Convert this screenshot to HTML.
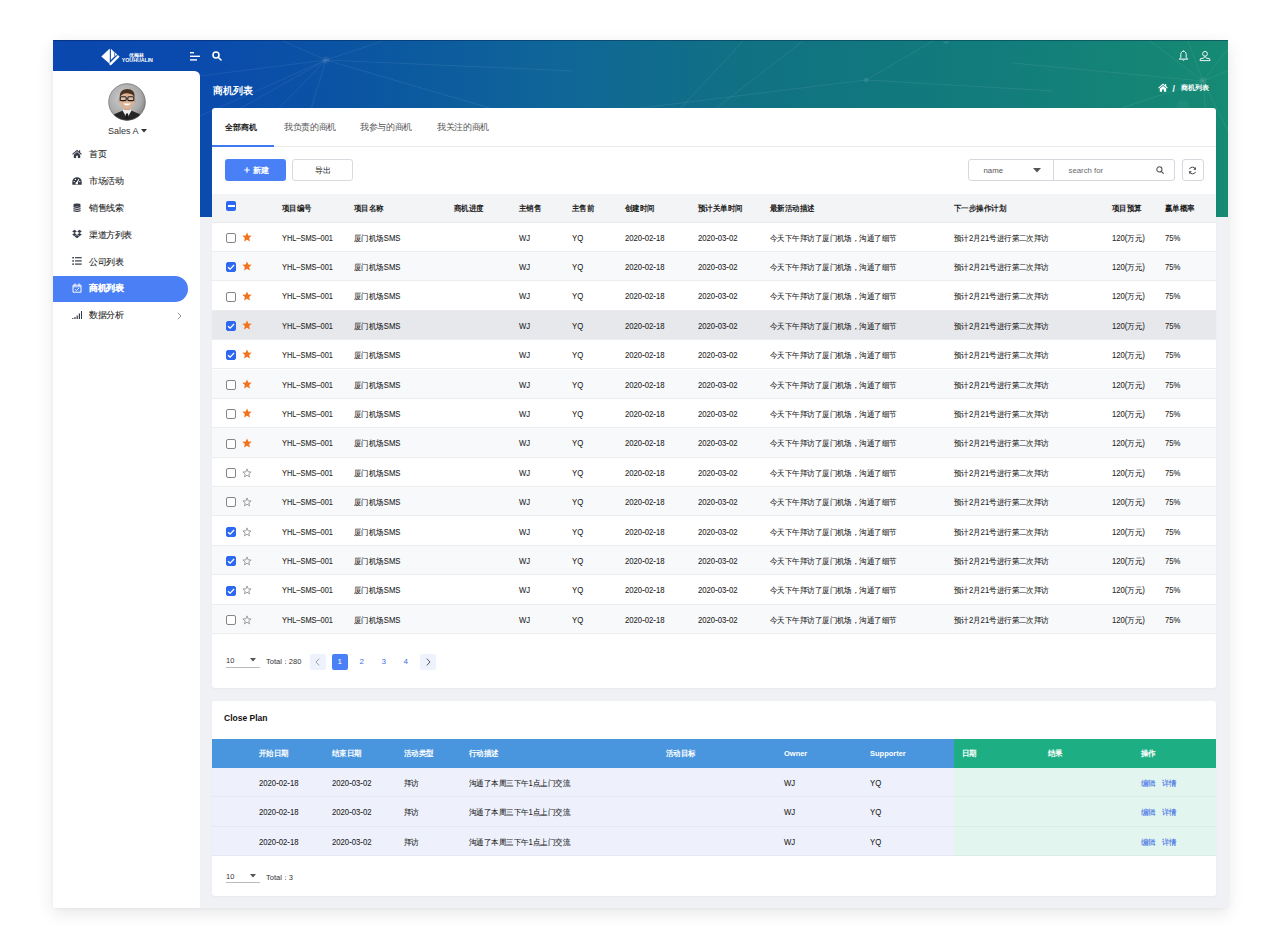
<!DOCTYPE html><html><head><meta charset="utf-8"><style>
*{box-sizing:border-box;margin:0;padding:0}
html,body{width:1280px;height:947px;overflow:hidden;background:#fff;font-family:"Liberation Sans",sans-serif;color:#222}
.c{font-size:0.92em}
#frame{position:absolute;left:53px;top:40px;width:1175px;height:868px;background:#f0f1f4;box-shadow:0 5px 16px rgba(0,0,0,0.10),0 1px 3px rgba(0,0,0,0.03);overflow:hidden}
#hdr{position:absolute;left:0;top:0;width:1175px;height:177px;background:linear-gradient(90deg,#0a47ae 0%,#0a4aad 12%,#0b55a2 26%,#0f6698 43%,#117282 60%,#127d7b 81%,#168a73 100%);border-top:1px solid rgba(0,20,60,0.35)}
#side{position:absolute;left:0;top:30.5px;width:147px;height:838px;background:#fff;border-top-right-radius:5.5px}
.card{position:absolute;left:159px;width:1004px;background:#fff;border-radius:3px;box-shadow:0 1px 2px rgba(0,0,0,0.035)}
.a{position:absolute;white-space:nowrap;line-height:10px}
.th{position:absolute;font-size:8px;font-weight:bold;color:#1e1e1e;white-space:nowrap;line-height:10px;transform:scaleX(0.935);transform-origin:0 0}
.th .c{font-size:1em}
.td{position:absolute;font-size:8.3px;color:#1e1e1e;white-space:nowrap;line-height:10px;transform:scaleX(0.93);transform-origin:0 0}
.td .c{font-size:1em}
.td,.mi{-webkit-text-stroke:0.08px currentColor}
.row{position:absolute;left:0;width:1004px;height:29.4px;border-bottom:1px solid #ebedf0}
.cb{position:absolute;width:10px;height:10px;border:1.1px solid #858585;border-radius:2px;background:#fff}
.cb.on{background:#2c68f2;border-color:#2c68f2}
.mi{position:absolute;left:36px;font-size:9px;color:#1e1e1e;line-height:10px;white-space:nowrap}
.mi .c{font-size:1em}
.mi{transform:scale(0.955);transform-origin:0 50%}
.ic{position:absolute}
</style></head><body>
<div id="frame">
<div id="hdr">
<svg width="1175" height="177" style="position:absolute;left:0;top:0" viewBox="0 0 1175 177">
<g stroke="rgba(255,255,255,0.075)" stroke-width="1" fill="none">
<line x1="273" y1="19" x2="147" y2="35"/><line x1="273" y1="19" x2="147" y2="75"/><line x1="273" y1="19" x2="186" y2="68"/>
<line x1="273" y1="19" x2="225" y2="68"/><line x1="273" y1="19" x2="258" y2="68"/><line x1="273" y1="19" x2="440" y2="68"/>
<line x1="273" y1="19" x2="230" y2="0"/><line x1="273" y1="19" x2="330" y2="0"/><line x1="273" y1="19" x2="520" y2="30"/>
<line x1="627" y1="68" x2="690" y2="0"/><line x1="662" y1="68" x2="750" y2="0"/><line x1="580" y1="68" x2="813" y2="39"/>
<line x1="813" y1="39" x2="880" y2="0"/><line x1="813" y1="39" x2="1000" y2="50"/>
<line x1="1150" y1="40" x2="1097" y2="0"/><line x1="1150" y1="40" x2="1175" y2="8"/><line x1="1150" y1="40" x2="960" y2="22"/>
<line x1="1150" y1="40" x2="1162" y2="177"/><line x1="1150" y1="40" x2="1175" y2="90"/><line x1="1150" y1="40" x2="1060" y2="70"/>
<line x1="1150" y1="40" x2="1175" y2="30"/><line x1="1150" y1="40" x2="1135" y2="0"/>
</g>
<g fill="rgba(255,255,255,0.08)"><circle cx="273" cy="19" r="3.5"/><circle cx="1150" cy="40" r="3.5"/><circle cx="813" cy="39" r="2.5"/><circle cx="893" cy="0" r="3"/><circle cx="1130" cy="65" r="6" fill="rgba(255,255,255,0.04)"/></g>
</svg>
<svg class="ic" style="left:45px;top:4px" width="24" height="22" viewBox="0 0 24 22">
<path d="M3.3 11.6 L11.8 3.4 L11.8 17.6 L11 18.2 Z" fill="#fff"/>
<path d="M12.9 3.7 L16.4 7.2 L16.4 11.6 L12.9 15.0 Z" fill="#fff"/>
<path d="M17.1 7.6 L19.3 9.7 L17.1 11.0 Z" fill="#fff"/>
<path d="M10.9 18.9 L19.9 10.1 L21.6 11.7 L12.7 20.6 Z" fill="#fff"/>
</svg>
<div class="a" style="left:75.5px;top:10.5px;font-size:5px;color:#fff;line-height:6px;font-weight:bold">优梅林</div>
<div class="a" style="left:68.8px;top:16px;font-size:5.3px;color:#fff;line-height:6px;font-weight:bold;letter-spacing:-0.05px">YOUHUALIN</div>
<svg class="ic" style="left:137px;top:10px" width="11" height="11" viewBox="0 0 11 11">
<rect x="0" y="1" width="4" height="1.4" fill="#fff"/><rect x="0" y="4.6" width="10" height="1.4" fill="#fff"/><rect x="0" y="8.2" width="7" height="1.4" fill="#fff"/></svg>
<svg class="ic" style="left:159px;top:10px" width="10" height="10" viewBox="0 0 10 10">
<circle cx="4" cy="4" r="3" stroke="#fff" stroke-width="1.6" fill="none"/><line x1="6.2" y1="6.2" x2="9" y2="9" stroke="#fff" stroke-width="1.6" stroke-linecap="round"/></svg>
<svg class="ic" style="left:1125px;top:9px" width="11" height="12" viewBox="0 0 11 12">
<path d="M5.5 1.3 C3.7 1.3 2.8 2.7 2.8 4.6 L2.8 7.4 C2.8 8.2 2.2 8.6 1.2 9.1 L9.8 9.1 C8.8 8.6 8.2 8.2 8.2 7.4 L8.2 4.6 C8.2 2.7 7.3 1.3 5.5 1.3 Z" stroke="#fff" stroke-width="0.95" fill="none" stroke-linejoin="round"/>
<path d="M4.5 9.6 Q5.5 11.2 6.5 9.6" stroke="#fff" stroke-width="0.95" fill="none"/><line x1="5.5" y1="0.4" x2="5.5" y2="1.4" stroke="#fff" stroke-width="0.9"/></svg>
<svg class="ic" style="left:1146px;top:9px" width="12" height="12" viewBox="0 0 12 12">
<circle cx="6" cy="3.8" r="2.4" stroke="#fff" stroke-width="0.9" fill="none"/>
<path d="M6 6.4 L4.6 8.2 L1.6 8.6 L0.9 10.6 L11.1 10.6 L10.4 8.6 L7.4 8.2 Z" stroke="#fff" stroke-width="0.9" fill="none" stroke-linejoin="round"/></svg>
<div class="a" style="left:160px;top:45px;font-size:10px;color:#fff;font-weight:bold"><span style="font-size:9.9px">商机列表</span></div>
<svg class="ic" style="left:1104.5px;top:41.8px" width="10" height="9" viewBox="0 0 10 9">
<path d="M5 0.6 L0.2 4.7 L0.9 5.5 L5 2.0 L9.1 5.5 L9.8 4.7 L8.2 3.3 L8.2 1.0 L7.0 1.0 L7.0 2.3 Z" fill="#fff"/><path d="M5 2.9 L1.8 5.6 L1.8 8.7 L4.1 8.7 L4.1 6.6 L5.9 6.6 L5.9 8.7 L8.2 8.7 L8.2 5.6 Z" fill="#fff"/></svg>
<div class="a" style="left:1119.5px;top:42.5px;font-size:8.5px;color:#fff;font-weight:bold">/</div>
<div class="a" style="left:1128px;top:42.3px;font-size:8px;color:#fff;font-weight:bold"><span class="c">商机列表</span></div>
</div>
<div id="side">
<svg class="ic" style="left:55px;top:12px" width="38" height="38" viewBox="0 0 38 38">
<defs><clipPath id="av"><circle cx="19" cy="19" r="18.5"/></clipPath>
<radialGradient id="bg" cx="0.42" cy="0.4" r="0.65"><stop offset="0" stop-color="#cfcfcf"/><stop offset="0.7" stop-color="#a9a9a9"/><stop offset="1" stop-color="#7a7a7a"/></radialGradient></defs>
<g clip-path="url(#av)">
<rect width="38" height="38" fill="url(#bg)"/>
<path d="M1 38 Q3 32 9 30 L15 27.5 L19 31 L23 27.5 L29 30 Q35 32 37 38 Z" fill="#262626"/>
<path d="M14.5 27.5 L19 35.5 L23.5 27.5 L21.5 25.5 L16.5 25.5 Z" fill="#eeeeee"/>
<path d="M18 30.5 L20 30.5 L21 36 L17 36 Z" fill="#1b1b1b"/>
<rect x="16.2" y="22" width="5.6" height="5" fill="#c99877"/>
<ellipse cx="11.6" cy="17.5" rx="1.2" ry="2" fill="#c99877"/><ellipse cx="26.4" cy="17.5" rx="1.2" ry="2" fill="#c99877"/>
<ellipse cx="19" cy="17.2" rx="7.2" ry="9.2" fill="#dcb296"/>
<path d="M11.6 15 Q11 6.5 19 6 Q27.5 6 26.6 15 Q25.5 10.5 19 10.2 Q13 10.4 11.6 15 Z" fill="#4a3020"/>
<rect x="12.2" y="13.8" width="6" height="3.8" rx="1.2" stroke="#1c1c1c" stroke-width="1.1" fill="rgba(255,255,255,0.15)"/>
<rect x="19.8" y="13.8" width="6" height="3.8" rx="1.2" stroke="#1c1c1c" stroke-width="1.1" fill="rgba(255,255,255,0.15)"/>
<path d="M15 20.6 Q19 24.6 23 20.6 Z" fill="#fff"/>
</g>
<circle cx="19" cy="19" r="18.3" stroke="#666" stroke-width="0.6" fill="none"/>
</svg>
<div class="a" style="left:55px;top:55px;font-size:9px;color:#333">Sales A</div>
<svg class="ic" style="left:88px;top:58px" width="6" height="4" viewBox="0 0 6 4"><path d="M0 0 L6 0 L3 3.5 Z" fill="#333"/></svg>
<div style="position:absolute;left:0;top:205px;width:135px;height:26px;background:#4a7ff5;border-radius:0 13px 13px 0"></div>
<svg class="ic" style="left:19px;top:78.3px" width="10" height="10" viewBox="0 0 10 10"><path d="M5 0.8 L0.2 4.9 L0.9 5.7 L5 2.2 L9.1 5.7 L9.8 4.9 L8.2 3.5 L8.2 1.2 L7.0 1.2 L7.0 2.5 Z" fill="#363b47"/><path d="M5 3.1 L1.8 5.8 L1.8 8.9 L4.1 8.9 L4.1 6.8 L5.9 6.8 L5.9 8.9 L8.2 8.9 L8.2 5.8 Z" fill="#363b47"/></svg>
<div class="mi" style="top:78.7px;color:#1e1e1e;"><span class="c">首页</span></div>
<svg class="ic" style="left:19px;top:105.3px" width="10" height="10" viewBox="0 0 10 10"><path d="M5 1.2 A4.7 4.7 0 0 0 0.3 5.9 L0.3 8.8 L9.7 8.8 L9.7 5.9 A4.7 4.7 0 0 0 5 1.2 Z" fill="#363b47"/><circle cx="2.2" cy="5.6" r="0.7" fill="#fff"/><circle cx="3.4" cy="3.4" r="0.7" fill="#fff"/><circle cx="7.8" cy="5.6" r="0.7" fill="#fff"/><path d="M4.6 7.6 L6.8 3.2" stroke="#fff" stroke-width="1.1"/><circle cx="4.8" cy="7.3" r="1.2" fill="#fff"/></svg>
<div class="mi" style="top:105.7px;color:#1e1e1e;"><span class="c">市场活动</span></div>
<svg class="ic" style="left:19px;top:132.0px" width="10" height="10" viewBox="0 0 10 10"><ellipse cx="5" cy="1.9" rx="3.6" ry="1.3" fill="#363b47"/><path d="M1.4 2.8 Q5 4.4 8.6 2.8 L8.6 4.2 Q5 5.8 1.4 4.2 Z" fill="#363b47"/><path d="M1.4 4.9 Q5 6.5 8.6 4.9 L8.6 6.3 Q5 7.9 1.4 6.3 Z" fill="#363b47"/><path d="M1.4 7.0 Q5 8.6 8.6 7.0 L8.6 8.2 Q5 9.8 1.4 8.2 Z" fill="#363b47"/></svg>
<div class="mi" style="top:132.4px;color:#1e1e1e;"><span class="c">销售线索</span></div>
<svg class="ic" style="left:19px;top:158.9px" width="10" height="10" viewBox="0 0 10 10"><path d="M2.5 0.8 L0.2 2.4 L2.5 4 L4.8 2.4 Z M7.5 0.8 L5.2 2.4 L7.5 4 L9.8 2.4 Z M2.5 4 L0.2 5.6 L2.5 7.2 L4.8 5.6 Z M7.5 4 L5.2 5.6 L7.5 7.2 L9.8 5.6 Z M5 6 L2.6 7.6 L5 9.2 L7.4 7.6 Z" fill="#363b47"/></svg>
<div class="mi" style="top:159.3px;color:#1e1e1e;"><span class="c">渠道方列表</span></div>
<svg class="ic" style="left:19px;top:185.9px" width="10" height="10" viewBox="0 0 10 10"><rect x="0.3" y="1" width="1.6" height="1.5" fill="#363b47"/><rect x="3" y="1.1" width="6.7" height="1.2" fill="#363b47"/><rect x="0.3" y="4.2" width="1.6" height="1.5" fill="#363b47"/><rect x="3" y="4.3" width="6.7" height="1.2" fill="#363b47"/><rect x="0.3" y="7.4" width="1.6" height="1.5" fill="#363b47"/><rect x="3" y="7.5" width="6.7" height="1.2" fill="#363b47"/></svg>
<div class="mi" style="top:186.3px;color:#1e1e1e;"><span class="c">公司列表</span></div>
<svg class="ic" style="left:19px;top:212.2px" width="10" height="10" viewBox="0 0 10 10"><path d="M1 2.2 L9 2.2 L9 9.2 L1 9.2 Z" stroke="#fff" stroke-width="1" fill="none"/><line x1="1" y1="3.8" x2="9" y2="3.8" stroke="#fff" stroke-width="0.8"/><rect x="2.4" y="0.5" width="1.1" height="2.4" fill="#fff"/><rect x="6.5" y="0.5" width="1.1" height="2.4" fill="#fff"/><path d="M3.1 6.3 L4.5 7.5 L7 5.1" stroke="#fff" stroke-width="0.9" fill="none"/></svg>
<div class="mi" style="top:212.6px;color:#fff;font-weight:bold"><span class="c">商机列表</span></div>
<svg class="ic" style="left:19px;top:239.2px" width="10" height="10" viewBox="0 0 10 10"><rect x="0.2" y="8" width="1.2" height="1" fill="#363b47"/><rect x="2.4" y="7" width="1.2" height="2" fill="#363b47"/><rect x="4.6" y="5.5" width="1.2" height="3.5" fill="#363b47"/><rect x="6.8" y="3.5" width="1.2" height="5.5" fill="#363b47"/><rect x="9" y="1" width="1" height="8" fill="#363b47"/></svg>
<div class="mi" style="top:239.6px;color:#1e1e1e;"><span class="c">数据分析</span></div>
<svg class="ic" style="left:124px;top:241px" width="5" height="8" viewBox="0 0 5 8"><path d="M0.8 0.8 L4 4 L0.8 7.2" stroke="#888" stroke-width="0.9" fill="none"/></svg>
</div>
<div class="card" style="top:68px;height:580px">
<div class="a" style="left:13px;top:14px;font-size:9px;color:#1a1a1a;font-weight:bold"><span style="font-size:8.3px">全部商机</span></div>
<div class="a" style="left:72px;top:14px;font-size:9px;color:#555"><span style="font-size:9px;display:inline-block;transform:scale(0.96);transform-origin:0 50%">我负责的商机</span></div>
<div class="a" style="left:148px;top:14px;font-size:9px;color:#555"><span style="font-size:9px;display:inline-block;transform:scale(0.96);transform-origin:0 50%">我参与的商机</span></div>
<div class="a" style="left:225px;top:14px;font-size:9px;color:#555"><span style="font-size:9px;display:inline-block;transform:scale(0.96);transform-origin:0 50%">我关注的商机</span></div>
<div style="position:absolute;left:0;top:38px;width:1004px;height:1px;background:#e8eaee"></div>
<div style="position:absolute;left:0;top:37px;width:61.5px;height:2px;background:#3d7af0"></div>
<div style="position:absolute;left:12.5px;top:51px;width:61.5px;height:22px;background:#4a80f6;border-radius:3px"></div>
<svg class="ic" style="left:31.5px;top:59px" width="6" height="6" viewBox="0 0 6 6"><path d="M3 0.3 L3 5.7 M0.3 3 L5.7 3" stroke="#fff" stroke-width="1.2"/></svg>
<div class="a" style="left:41px;top:58px;font-size:8px;color:#fff;font-weight:bold"><span style="font-size:8.2px">新建</span></div>
<div style="position:absolute;left:80px;top:51px;width:61px;height:22px;background:#fff;border:1px solid #d8dadf;border-radius:3px"></div>
<div class="a" style="left:103px;top:58px;font-size:8px;color:#222"><span style="font-size:8.2px">导出</span></div>
<div style="position:absolute;left:756px;top:51px;width:206.5px;height:22px;border:1px solid #d6d8dd;border-radius:3px"></div>
<div style="position:absolute;left:841px;top:51px;width:1px;height:22px;background:#d6d8dd"></div>
<div class="a" style="left:771.5px;top:57.8px;font-size:7.8px;color:#555">name</div>
<svg class="ic" style="left:821px;top:59.5px" width="8" height="5" viewBox="0 0 8 5"><path d="M0 0 L8 0 L4 4.5 Z" fill="#555"/></svg>
<div class="a" style="left:856.5px;top:57.8px;font-size:7.8px;color:#6a6a6a">search for</div>
<svg class="ic" style="left:943.5px;top:58px" width="8" height="8" viewBox="0 0 8 8"><circle cx="3.4" cy="3.4" r="2.6" stroke="#555" stroke-width="1.05" fill="none"/><line x1="5.3" y1="5.3" x2="7.3" y2="7.3" stroke="#555" stroke-width="1.2" stroke-linecap="round"/></svg>
<div style="position:absolute;left:969.5px;top:51px;width:22.5px;height:22px;border:1px solid #d6d8dd;border-radius:3px"></div>
<svg class="ic" style="left:976px;top:58px" width="9" height="9" viewBox="0 0 9 9">
<path d="M7.6 3.4 A3.3 3.3 0 0 0 1.4 3.2" stroke="#444" stroke-width="1" fill="none"/><path d="M7.9 1 L7.9 3.8 L5.2 3.8 Z" fill="#444"/>
<path d="M1.4 5.6 A3.3 3.3 0 0 0 7.6 5.8" stroke="#444" stroke-width="1" fill="none"/><path d="M1.1 8 L1.1 5.2 L3.8 5.2 Z" fill="#444"/></svg>
<div style="position:absolute;left:0;top:85.5px;width:1004px;height:29px;background:#f3f4f6;border-bottom:1px solid #e9ebee"></div>
<div style="position:absolute;left:14.2px;top:93px;width:10px;height:10px;background:#2c68f2;border-radius:2px"></div>
<div style="position:absolute;left:15.9px;top:97px;width:6.8px;height:2px;background:#fff"></div>
<div class="th" style="left:70px;top:95.5px"><span class="c">项目编号</span></div>
<div class="th" style="left:142px;top:95.5px"><span class="c">项目名称</span></div>
<div class="th" style="left:242px;top:95.5px"><span class="c">商机进度</span></div>
<div class="th" style="left:307px;top:95.5px"><span class="c">主销售</span></div>
<div class="th" style="left:360px;top:95.5px"><span class="c">主售前</span></div>
<div class="th" style="left:413px;top:95.5px"><span class="c">创建时间</span></div>
<div class="th" style="left:486px;top:95.5px"><span class="c">预计关单时间</span></div>
<div class="th" style="left:558px;top:95.5px"><span class="c">最新活动描述</span></div>
<div class="th" style="left:742px;top:95.5px"><span class="c">下一步操作计划</span></div>
<div class="th" style="left:900px;top:95.5px"><span class="c">项目预算</span></div>
<div class="th" style="left:953px;top:95.5px"><span class="c">赢单概率</span></div>
<div class="row" style="top:114.5px;background:#fff">
<div class="cb" style="left:14.2px;top:10.4px"></div>
<svg class="ic" style="left:30px;top:9.4px" width="10" height="10" viewBox="0 0 10 10"><path d="M5 0.5 L6.35 3.6 L9.7 3.85 L7.15 6.05 L7.95 9.5 L5 7.7 L2.05 9.5 L2.85 6.05 L0.3 3.85 L3.65 3.6 Z" fill="#f2731d"/></svg>
<div class="td" style="left:70px;top:10px;transform:scaleX(0.89)">YHL–SMS–001</div>
<div class="td" style="left:142px;top:10px"><span class="c">厦门机场</span>SMS</div>
<div class="td" style="left:307px;top:10px">WJ</div>
<div class="td" style="left:360px;top:10px">YQ</div>
<div class="td" style="left:413px;top:10px">2020-02-18</div>
<div class="td" style="left:486px;top:10px">2020-03-02</div>
<div class="td" style="left:558px;top:10px"><span class="c">今天下午拜访了厦门机场，沟通了细节</span></div>
<div class="td" style="left:742px;top:10px"><span class="c">预计</span>2<span class="c">月</span>21<span class="c">号进行第二次拜访</span></div>
<div class="td" style="left:900px;top:10px">120(<span class="c">万元</span>)</div>
<div class="td" style="left:953px;top:10px">75%</div>
</div>
<div class="row" style="top:143.9px;background:#f8f9fb">
<div class="cb on" style="left:14.2px;top:10.4px"></div>
<svg class="ic" style="left:14.2px;top:10.4px" width="10" height="10" viewBox="0 0 10 10"><path d="M2 5.2 L4.1 7.1 L8.1 3" stroke="#fff" stroke-width="1.3" fill="none"/></svg>
<svg class="ic" style="left:30px;top:9.4px" width="10" height="10" viewBox="0 0 10 10"><path d="M5 0.5 L6.35 3.6 L9.7 3.85 L7.15 6.05 L7.95 9.5 L5 7.7 L2.05 9.5 L2.85 6.05 L0.3 3.85 L3.65 3.6 Z" fill="#f2731d"/></svg>
<div class="td" style="left:70px;top:10px;transform:scaleX(0.89)">YHL–SMS–001</div>
<div class="td" style="left:142px;top:10px"><span class="c">厦门机场</span>SMS</div>
<div class="td" style="left:307px;top:10px">WJ</div>
<div class="td" style="left:360px;top:10px">YQ</div>
<div class="td" style="left:413px;top:10px">2020-02-18</div>
<div class="td" style="left:486px;top:10px">2020-03-02</div>
<div class="td" style="left:558px;top:10px"><span class="c">今天下午拜访了厦门机场，沟通了细节</span></div>
<div class="td" style="left:742px;top:10px"><span class="c">预计</span>2<span class="c">月</span>21<span class="c">号进行第二次拜访</span></div>
<div class="td" style="left:900px;top:10px">120(<span class="c">万元</span>)</div>
<div class="td" style="left:953px;top:10px">75%</div>
</div>
<div class="row" style="top:173.3px;background:#fff">
<div class="cb" style="left:14.2px;top:10.4px"></div>
<svg class="ic" style="left:30px;top:9.4px" width="10" height="10" viewBox="0 0 10 10"><path d="M5 0.5 L6.35 3.6 L9.7 3.85 L7.15 6.05 L7.95 9.5 L5 7.7 L2.05 9.5 L2.85 6.05 L0.3 3.85 L3.65 3.6 Z" fill="#f2731d"/></svg>
<div class="td" style="left:70px;top:10px;transform:scaleX(0.89)">YHL–SMS–001</div>
<div class="td" style="left:142px;top:10px"><span class="c">厦门机场</span>SMS</div>
<div class="td" style="left:307px;top:10px">WJ</div>
<div class="td" style="left:360px;top:10px">YQ</div>
<div class="td" style="left:413px;top:10px">2020-02-18</div>
<div class="td" style="left:486px;top:10px">2020-03-02</div>
<div class="td" style="left:558px;top:10px"><span class="c">今天下午拜访了厦门机场，沟通了细节</span></div>
<div class="td" style="left:742px;top:10px"><span class="c">预计</span>2<span class="c">月</span>21<span class="c">号进行第二次拜访</span></div>
<div class="td" style="left:900px;top:10px">120(<span class="c">万元</span>)</div>
<div class="td" style="left:953px;top:10px">75%</div>
</div>
<div class="row" style="top:202.7px;background:#e7e8ec">
<div class="cb on" style="left:14.2px;top:10.4px"></div>
<svg class="ic" style="left:14.2px;top:10.4px" width="10" height="10" viewBox="0 0 10 10"><path d="M2 5.2 L4.1 7.1 L8.1 3" stroke="#fff" stroke-width="1.3" fill="none"/></svg>
<svg class="ic" style="left:30px;top:9.4px" width="10" height="10" viewBox="0 0 10 10"><path d="M5 0.5 L6.35 3.6 L9.7 3.85 L7.15 6.05 L7.95 9.5 L5 7.7 L2.05 9.5 L2.85 6.05 L0.3 3.85 L3.65 3.6 Z" fill="#f2731d"/></svg>
<div class="td" style="left:70px;top:10px;transform:scaleX(0.89)">YHL–SMS–001</div>
<div class="td" style="left:142px;top:10px"><span class="c">厦门机场</span>SMS</div>
<div class="td" style="left:307px;top:10px">WJ</div>
<div class="td" style="left:360px;top:10px">YQ</div>
<div class="td" style="left:413px;top:10px">2020-02-18</div>
<div class="td" style="left:486px;top:10px">2020-03-02</div>
<div class="td" style="left:558px;top:10px"><span class="c">今天下午拜访了厦门机场，沟通了细节</span></div>
<div class="td" style="left:742px;top:10px"><span class="c">预计</span>2<span class="c">月</span>21<span class="c">号进行第二次拜访</span></div>
<div class="td" style="left:900px;top:10px">120(<span class="c">万元</span>)</div>
<div class="td" style="left:953px;top:10px">75%</div>
</div>
<div class="row" style="top:232.1px;background:#fff">
<div class="cb on" style="left:14.2px;top:10.4px"></div>
<svg class="ic" style="left:14.2px;top:10.4px" width="10" height="10" viewBox="0 0 10 10"><path d="M2 5.2 L4.1 7.1 L8.1 3" stroke="#fff" stroke-width="1.3" fill="none"/></svg>
<svg class="ic" style="left:30px;top:9.4px" width="10" height="10" viewBox="0 0 10 10"><path d="M5 0.5 L6.35 3.6 L9.7 3.85 L7.15 6.05 L7.95 9.5 L5 7.7 L2.05 9.5 L2.85 6.05 L0.3 3.85 L3.65 3.6 Z" fill="#f2731d"/></svg>
<div class="td" style="left:70px;top:10px;transform:scaleX(0.89)">YHL–SMS–001</div>
<div class="td" style="left:142px;top:10px"><span class="c">厦门机场</span>SMS</div>
<div class="td" style="left:307px;top:10px">WJ</div>
<div class="td" style="left:360px;top:10px">YQ</div>
<div class="td" style="left:413px;top:10px">2020-02-18</div>
<div class="td" style="left:486px;top:10px">2020-03-02</div>
<div class="td" style="left:558px;top:10px"><span class="c">今天下午拜访了厦门机场，沟通了细节</span></div>
<div class="td" style="left:742px;top:10px"><span class="c">预计</span>2<span class="c">月</span>21<span class="c">号进行第二次拜访</span></div>
<div class="td" style="left:900px;top:10px">120(<span class="c">万元</span>)</div>
<div class="td" style="left:953px;top:10px">75%</div>
</div>
<div class="row" style="top:261.5px;background:#f8f9fb">
<div class="cb" style="left:14.2px;top:10.4px"></div>
<svg class="ic" style="left:30px;top:9.4px" width="10" height="10" viewBox="0 0 10 10"><path d="M5 0.5 L6.35 3.6 L9.7 3.85 L7.15 6.05 L7.95 9.5 L5 7.7 L2.05 9.5 L2.85 6.05 L0.3 3.85 L3.65 3.6 Z" fill="#f2731d"/></svg>
<div class="td" style="left:70px;top:10px;transform:scaleX(0.89)">YHL–SMS–001</div>
<div class="td" style="left:142px;top:10px"><span class="c">厦门机场</span>SMS</div>
<div class="td" style="left:307px;top:10px">WJ</div>
<div class="td" style="left:360px;top:10px">YQ</div>
<div class="td" style="left:413px;top:10px">2020-02-18</div>
<div class="td" style="left:486px;top:10px">2020-03-02</div>
<div class="td" style="left:558px;top:10px"><span class="c">今天下午拜访了厦门机场，沟通了细节</span></div>
<div class="td" style="left:742px;top:10px"><span class="c">预计</span>2<span class="c">月</span>21<span class="c">号进行第二次拜访</span></div>
<div class="td" style="left:900px;top:10px">120(<span class="c">万元</span>)</div>
<div class="td" style="left:953px;top:10px">75%</div>
</div>
<div class="row" style="top:290.9px;background:#fff">
<div class="cb" style="left:14.2px;top:10.4px"></div>
<svg class="ic" style="left:30px;top:9.4px" width="10" height="10" viewBox="0 0 10 10"><path d="M5 0.5 L6.35 3.6 L9.7 3.85 L7.15 6.05 L7.95 9.5 L5 7.7 L2.05 9.5 L2.85 6.05 L0.3 3.85 L3.65 3.6 Z" fill="#f2731d"/></svg>
<div class="td" style="left:70px;top:10px;transform:scaleX(0.89)">YHL–SMS–001</div>
<div class="td" style="left:142px;top:10px"><span class="c">厦门机场</span>SMS</div>
<div class="td" style="left:307px;top:10px">WJ</div>
<div class="td" style="left:360px;top:10px">YQ</div>
<div class="td" style="left:413px;top:10px">2020-02-18</div>
<div class="td" style="left:486px;top:10px">2020-03-02</div>
<div class="td" style="left:558px;top:10px"><span class="c">今天下午拜访了厦门机场，沟通了细节</span></div>
<div class="td" style="left:742px;top:10px"><span class="c">预计</span>2<span class="c">月</span>21<span class="c">号进行第二次拜访</span></div>
<div class="td" style="left:900px;top:10px">120(<span class="c">万元</span>)</div>
<div class="td" style="left:953px;top:10px">75%</div>
</div>
<div class="row" style="top:320.3px;background:#f8f9fb">
<div class="cb" style="left:14.2px;top:10.4px"></div>
<svg class="ic" style="left:30px;top:9.4px" width="10" height="10" viewBox="0 0 10 10"><path d="M5 0.5 L6.35 3.6 L9.7 3.85 L7.15 6.05 L7.95 9.5 L5 7.7 L2.05 9.5 L2.85 6.05 L0.3 3.85 L3.65 3.6 Z" fill="#f2731d"/></svg>
<div class="td" style="left:70px;top:10px;transform:scaleX(0.89)">YHL–SMS–001</div>
<div class="td" style="left:142px;top:10px"><span class="c">厦门机场</span>SMS</div>
<div class="td" style="left:307px;top:10px">WJ</div>
<div class="td" style="left:360px;top:10px">YQ</div>
<div class="td" style="left:413px;top:10px">2020-02-18</div>
<div class="td" style="left:486px;top:10px">2020-03-02</div>
<div class="td" style="left:558px;top:10px"><span class="c">今天下午拜访了厦门机场，沟通了细节</span></div>
<div class="td" style="left:742px;top:10px"><span class="c">预计</span>2<span class="c">月</span>21<span class="c">号进行第二次拜访</span></div>
<div class="td" style="left:900px;top:10px">120(<span class="c">万元</span>)</div>
<div class="td" style="left:953px;top:10px">75%</div>
</div>
<div class="row" style="top:349.7px;background:#fff">
<div class="cb" style="left:14.2px;top:10.4px"></div>
<svg class="ic" style="left:30px;top:10px" width="10" height="10" viewBox="0 0 10 10"><path d="M5 0.9 L6.1 3.8 L9.1 4 L6.8 5.9 L7.5 8.9 L5 7.2 L2.5 8.9 L3.2 5.9 L0.9 4 L3.9 3.8 Z" stroke="#8a8a8a" stroke-width="0.8" fill="none" stroke-linejoin="round"/></svg>
<div class="td" style="left:70px;top:10px;transform:scaleX(0.89)">YHL–SMS–001</div>
<div class="td" style="left:142px;top:10px"><span class="c">厦门机场</span>SMS</div>
<div class="td" style="left:307px;top:10px">WJ</div>
<div class="td" style="left:360px;top:10px">YQ</div>
<div class="td" style="left:413px;top:10px">2020-02-18</div>
<div class="td" style="left:486px;top:10px">2020-03-02</div>
<div class="td" style="left:558px;top:10px"><span class="c">今天下午拜访了厦门机场，沟通了细节</span></div>
<div class="td" style="left:742px;top:10px"><span class="c">预计</span>2<span class="c">月</span>21<span class="c">号进行第二次拜访</span></div>
<div class="td" style="left:900px;top:10px">120(<span class="c">万元</span>)</div>
<div class="td" style="left:953px;top:10px">75%</div>
</div>
<div class="row" style="top:379.1px;background:#f8f9fb">
<div class="cb" style="left:14.2px;top:10.4px"></div>
<svg class="ic" style="left:30px;top:10px" width="10" height="10" viewBox="0 0 10 10"><path d="M5 0.9 L6.1 3.8 L9.1 4 L6.8 5.9 L7.5 8.9 L5 7.2 L2.5 8.9 L3.2 5.9 L0.9 4 L3.9 3.8 Z" stroke="#8a8a8a" stroke-width="0.8" fill="none" stroke-linejoin="round"/></svg>
<div class="td" style="left:70px;top:10px;transform:scaleX(0.89)">YHL–SMS–001</div>
<div class="td" style="left:142px;top:10px"><span class="c">厦门机场</span>SMS</div>
<div class="td" style="left:307px;top:10px">WJ</div>
<div class="td" style="left:360px;top:10px">YQ</div>
<div class="td" style="left:413px;top:10px">2020-02-18</div>
<div class="td" style="left:486px;top:10px">2020-03-02</div>
<div class="td" style="left:558px;top:10px"><span class="c">今天下午拜访了厦门机场，沟通了细节</span></div>
<div class="td" style="left:742px;top:10px"><span class="c">预计</span>2<span class="c">月</span>21<span class="c">号进行第二次拜访</span></div>
<div class="td" style="left:900px;top:10px">120(<span class="c">万元</span>)</div>
<div class="td" style="left:953px;top:10px">75%</div>
</div>
<div class="row" style="top:408.5px;background:#fff">
<div class="cb on" style="left:14.2px;top:10.4px"></div>
<svg class="ic" style="left:14.2px;top:10.4px" width="10" height="10" viewBox="0 0 10 10"><path d="M2 5.2 L4.1 7.1 L8.1 3" stroke="#fff" stroke-width="1.3" fill="none"/></svg>
<svg class="ic" style="left:30px;top:10px" width="10" height="10" viewBox="0 0 10 10"><path d="M5 0.9 L6.1 3.8 L9.1 4 L6.8 5.9 L7.5 8.9 L5 7.2 L2.5 8.9 L3.2 5.9 L0.9 4 L3.9 3.8 Z" stroke="#8a8a8a" stroke-width="0.8" fill="none" stroke-linejoin="round"/></svg>
<div class="td" style="left:70px;top:10px;transform:scaleX(0.89)">YHL–SMS–001</div>
<div class="td" style="left:142px;top:10px"><span class="c">厦门机场</span>SMS</div>
<div class="td" style="left:307px;top:10px">WJ</div>
<div class="td" style="left:360px;top:10px">YQ</div>
<div class="td" style="left:413px;top:10px">2020-02-18</div>
<div class="td" style="left:486px;top:10px">2020-03-02</div>
<div class="td" style="left:558px;top:10px"><span class="c">今天下午拜访了厦门机场，沟通了细节</span></div>
<div class="td" style="left:742px;top:10px"><span class="c">预计</span>2<span class="c">月</span>21<span class="c">号进行第二次拜访</span></div>
<div class="td" style="left:900px;top:10px">120(<span class="c">万元</span>)</div>
<div class="td" style="left:953px;top:10px">75%</div>
</div>
<div class="row" style="top:437.9px;background:#f8f9fb">
<div class="cb on" style="left:14.2px;top:10.4px"></div>
<svg class="ic" style="left:14.2px;top:10.4px" width="10" height="10" viewBox="0 0 10 10"><path d="M2 5.2 L4.1 7.1 L8.1 3" stroke="#fff" stroke-width="1.3" fill="none"/></svg>
<svg class="ic" style="left:30px;top:10px" width="10" height="10" viewBox="0 0 10 10"><path d="M5 0.9 L6.1 3.8 L9.1 4 L6.8 5.9 L7.5 8.9 L5 7.2 L2.5 8.9 L3.2 5.9 L0.9 4 L3.9 3.8 Z" stroke="#8a8a8a" stroke-width="0.8" fill="none" stroke-linejoin="round"/></svg>
<div class="td" style="left:70px;top:10px;transform:scaleX(0.89)">YHL–SMS–001</div>
<div class="td" style="left:142px;top:10px"><span class="c">厦门机场</span>SMS</div>
<div class="td" style="left:307px;top:10px">WJ</div>
<div class="td" style="left:360px;top:10px">YQ</div>
<div class="td" style="left:413px;top:10px">2020-02-18</div>
<div class="td" style="left:486px;top:10px">2020-03-02</div>
<div class="td" style="left:558px;top:10px"><span class="c">今天下午拜访了厦门机场，沟通了细节</span></div>
<div class="td" style="left:742px;top:10px"><span class="c">预计</span>2<span class="c">月</span>21<span class="c">号进行第二次拜访</span></div>
<div class="td" style="left:900px;top:10px">120(<span class="c">万元</span>)</div>
<div class="td" style="left:953px;top:10px">75%</div>
</div>
<div class="row" style="top:467.3px;background:#fff">
<div class="cb on" style="left:14.2px;top:10.4px"></div>
<svg class="ic" style="left:14.2px;top:10.4px" width="10" height="10" viewBox="0 0 10 10"><path d="M2 5.2 L4.1 7.1 L8.1 3" stroke="#fff" stroke-width="1.3" fill="none"/></svg>
<svg class="ic" style="left:30px;top:10px" width="10" height="10" viewBox="0 0 10 10"><path d="M5 0.9 L6.1 3.8 L9.1 4 L6.8 5.9 L7.5 8.9 L5 7.2 L2.5 8.9 L3.2 5.9 L0.9 4 L3.9 3.8 Z" stroke="#8a8a8a" stroke-width="0.8" fill="none" stroke-linejoin="round"/></svg>
<div class="td" style="left:70px;top:10px;transform:scaleX(0.89)">YHL–SMS–001</div>
<div class="td" style="left:142px;top:10px"><span class="c">厦门机场</span>SMS</div>
<div class="td" style="left:307px;top:10px">WJ</div>
<div class="td" style="left:360px;top:10px">YQ</div>
<div class="td" style="left:413px;top:10px">2020-02-18</div>
<div class="td" style="left:486px;top:10px">2020-03-02</div>
<div class="td" style="left:558px;top:10px"><span class="c">今天下午拜访了厦门机场，沟通了细节</span></div>
<div class="td" style="left:742px;top:10px"><span class="c">预计</span>2<span class="c">月</span>21<span class="c">号进行第二次拜访</span></div>
<div class="td" style="left:900px;top:10px">120(<span class="c">万元</span>)</div>
<div class="td" style="left:953px;top:10px">75%</div>
</div>
<div class="row" style="top:496.7px;background:#f8f9fb">
<div class="cb" style="left:14.2px;top:10.4px"></div>
<svg class="ic" style="left:30px;top:10px" width="10" height="10" viewBox="0 0 10 10"><path d="M5 0.9 L6.1 3.8 L9.1 4 L6.8 5.9 L7.5 8.9 L5 7.2 L2.5 8.9 L3.2 5.9 L0.9 4 L3.9 3.8 Z" stroke="#8a8a8a" stroke-width="0.8" fill="none" stroke-linejoin="round"/></svg>
<div class="td" style="left:70px;top:10px;transform:scaleX(0.89)">YHL–SMS–001</div>
<div class="td" style="left:142px;top:10px"><span class="c">厦门机场</span>SMS</div>
<div class="td" style="left:307px;top:10px">WJ</div>
<div class="td" style="left:360px;top:10px">YQ</div>
<div class="td" style="left:413px;top:10px">2020-02-18</div>
<div class="td" style="left:486px;top:10px">2020-03-02</div>
<div class="td" style="left:558px;top:10px"><span class="c">今天下午拜访了厦门机场，沟通了细节</span></div>
<div class="td" style="left:742px;top:10px"><span class="c">预计</span>2<span class="c">月</span>21<span class="c">号进行第二次拜访</span></div>
<div class="td" style="left:900px;top:10px">120(<span class="c">万元</span>)</div>
<div class="td" style="left:953px;top:10px">75%</div>
</div>
<div class="a" style="left:14px;top:548px;font-size:7.5px;color:#333">10</div>
<svg class="ic" style="left:38px;top:550px" width="6" height="4" viewBox="0 0 6 4"><path d="M0 0 L6 0 L3 3.5 Z" fill="#555"/></svg>
<div style="position:absolute;left:14px;top:558.5px;width:34px;height:1px;background:#bbb"></div>
<div class="a" style="left:54px;top:549px;font-size:7.5px;color:#333">Total<span class="c" style="font-size:7px">：</span>280</div>
<div style="position:absolute;left:98px;top:546px;width:15.5px;height:16px;background:#eef2fd;border-radius:2px"></div>
<svg class="ic" style="left:103px;top:550px" width="5" height="8" viewBox="0 0 5 8"><path d="M4.2 0.6 L1 4 L4.2 7.4" stroke="#999" stroke-width="0.9" fill="none"/></svg>
<div style="position:absolute;left:120px;top:546px;width:15.5px;height:16px;background:#4a80f6;border-radius:2px"></div>
<div class="a" style="left:125.5px;top:549px;font-size:8px;color:#fff">1</div>
<div class="a" style="left:147.5px;top:549px;font-size:8px;color:#3b6fe0">2</div>
<div class="a" style="left:169.5px;top:549px;font-size:8px;color:#3b6fe0">3</div>
<div class="a" style="left:191.5px;top:549px;font-size:8px;color:#3b6fe0">4</div>
<div style="position:absolute;left:208px;top:546px;width:15.5px;height:16px;background:#eef2fd;border-radius:2px"></div>
<svg class="ic" style="left:213.5px;top:550px" width="5" height="8" viewBox="0 0 5 8"><path d="M0.8 0.6 L4 4 L0.8 7.4" stroke="#444" stroke-width="0.9" fill="none"/></svg>
</div>
<div class="card" style="top:660.5px;height:195.5px">
<div class="a" style="left:12px;top:12.5px;font-size:8.5px;color:#111;font-weight:bold">Close Plan</div>
<div style="position:absolute;left:0;top:38.5px;width:742px;height:29px;background:#4a96de"></div>
<div style="position:absolute;left:742px;top:38.5px;width:262px;height:29px;background:#1daf83"></div>
<div class="th" style="left:47px;top:48.5px;color:#fff"><span class="c">开始日期</span></div>
<div class="th" style="left:120px;top:48.5px;color:#fff"><span class="c">结束日期</span></div>
<div class="th" style="left:192px;top:48.5px;color:#fff"><span class="c">活动类型</span></div>
<div class="th" style="left:257px;top:48.5px;color:#fff"><span class="c">行动描述</span></div>
<div class="th" style="left:454px;top:48.5px;color:#fff"><span class="c">活动目标</span></div>
<div class="th" style="left:572px;top:48.5px;color:#fff">Owner</div>
<div class="th" style="left:658px;top:48.5px;color:#fff">Supporter</div>
<div class="th" style="left:750px;top:48.5px;color:#fff"><span class="c">日期</span></div>
<div class="th" style="left:836px;top:48.5px;color:#fff"><span class="c">结果</span></div>
<div class="th" style="left:929px;top:48.5px;color:#fff"><span class="c">操作</span></div>
<div style="position:absolute;left:0;top:67.5px;width:742px;height:29.4px;background:#eef1fc;border-bottom:1px solid #e6e9f3"></div>
<div style="position:absolute;left:742px;top:67.5px;width:262px;height:29.4px;background:#e3f5ef;border-bottom:1px solid #d9eee6"></div>
<div class="td" style="left:47px;top:77.5px">2020-02-18</div>
<div class="td" style="left:120px;top:77.5px">2020-03-02</div>
<div class="td" style="left:192px;top:77.5px"><span class="c">拜访</span></div>
<div class="td" style="left:257px;top:77.5px"><span class="c">沟通了本周三下午</span>1<span class="c">点上门交流</span></div>
<div class="td" style="left:572px;top:77.5px">WJ</div>
<div class="td" style="left:658px;top:77.5px">YQ</div>
<div class="td" style="left:929px;top:77.5px;color:#3d6fe6"><span class="c">编辑</span></div>
<div class="td" style="left:950px;top:77.5px;color:#3d6fe6"><span class="c">详情</span></div>
<div style="position:absolute;left:0;top:96.9px;width:742px;height:29.4px;background:#eef1fc;border-bottom:1px solid #e6e9f3"></div>
<div style="position:absolute;left:742px;top:96.9px;width:262px;height:29.4px;background:#e3f5ef;border-bottom:1px solid #d9eee6"></div>
<div class="td" style="left:47px;top:106.9px">2020-02-18</div>
<div class="td" style="left:120px;top:106.9px">2020-03-02</div>
<div class="td" style="left:192px;top:106.9px"><span class="c">拜访</span></div>
<div class="td" style="left:257px;top:106.9px"><span class="c">沟通了本周三下午</span>1<span class="c">点上门交流</span></div>
<div class="td" style="left:572px;top:106.9px">WJ</div>
<div class="td" style="left:658px;top:106.9px">YQ</div>
<div class="td" style="left:929px;top:106.9px;color:#3d6fe6"><span class="c">编辑</span></div>
<div class="td" style="left:950px;top:106.9px;color:#3d6fe6"><span class="c">详情</span></div>
<div style="position:absolute;left:0;top:126.3px;width:742px;height:29.4px;background:#eef1fc;border-bottom:1px solid #e6e9f3"></div>
<div style="position:absolute;left:742px;top:126.3px;width:262px;height:29.4px;background:#e3f5ef;border-bottom:1px solid #d9eee6"></div>
<div class="td" style="left:47px;top:136.3px">2020-02-18</div>
<div class="td" style="left:120px;top:136.3px">2020-03-02</div>
<div class="td" style="left:192px;top:136.3px"><span class="c">拜访</span></div>
<div class="td" style="left:257px;top:136.3px"><span class="c">沟通了本周三下午</span>1<span class="c">点上门交流</span></div>
<div class="td" style="left:572px;top:136.3px">WJ</div>
<div class="td" style="left:658px;top:136.3px">YQ</div>
<div class="td" style="left:929px;top:136.3px;color:#3d6fe6"><span class="c">编辑</span></div>
<div class="td" style="left:950px;top:136.3px;color:#3d6fe6"><span class="c">详情</span></div>
<div class="a" style="left:14px;top:171px;font-size:7.5px;color:#333">10</div>
<svg class="ic" style="left:38px;top:173px" width="6" height="4" viewBox="0 0 6 4"><path d="M0 0 L6 0 L3 3.5 Z" fill="#555"/></svg>
<div style="position:absolute;left:14px;top:181.5px;width:34px;height:1px;background:#bbb"></div>
<div class="a" style="left:54px;top:172px;font-size:7.5px;color:#333">Total<span class="c" style="font-size:7px">：</span>3</div>
</div>
</div>
</body></html>
